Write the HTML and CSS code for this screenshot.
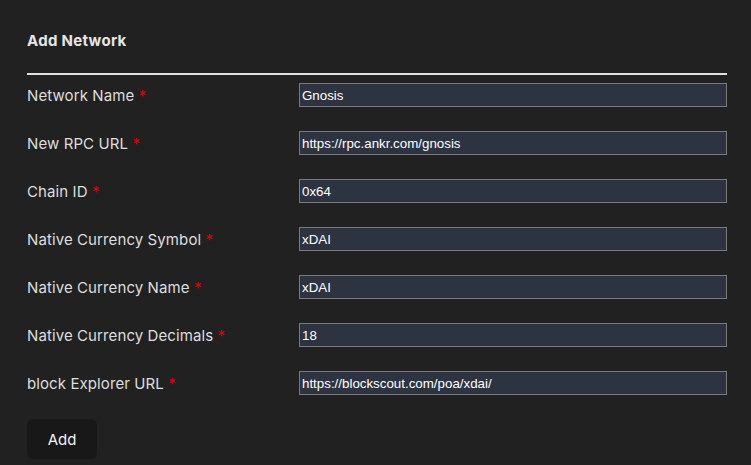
FILE: index.html
```html
<!DOCTYPE html>
<html>
<head>
<meta charset="utf-8">
<link rel="stylesheet" href="styles.css">
</head>
<body>
<div class="panel">
  <h2 class="title">Add Network</h2>
  <div class="rule"></div>
  <form class="form">
    <div class="row"><label class="label">Network Name <span class="req">*</span></label><input class="field" value="Gnosis"></div>
    <div class="row"><label class="label">New RPC URL <span class="req">*</span></label><input class="field" value="https://rpc.ankr.com/gnosis"></div>
    <div class="row"><label class="label">Chain ID <span class="req">*</span></label><input class="field" value="0x64"></div>
    <div class="row"><label class="label">Native Currency Symbol <span class="req">*</span></label><input class="field" value="xDAI"></div>
    <div class="row"><label class="label">Native Currency Name <span class="req">*</span></label><input class="field" value="xDAI"></div>
    <div class="row"><label class="label">Native Currency Decimals <span class="req">*</span></label><input class="field" value="18"></div>
    <div class="row"><label class="label">block Explorer URL <span class="req">*</span></label><input class="field" value="https://blockscout.com/poa/xdai/"></div>
  </form>
  <button class="btn" type="button">Add</button>
</div>
</body>
</html>
```
FILE: styles.css
```css
html, body {
  margin: 0;
  background: #212121;
  height: 100%;
}
.panel {
  padding: 30px 24px 0 27px;
  width: 700px;
  font-family: Inter, "Noto Sans", sans-serif;
}
.title {
  margin: 0;
  font-size: 15px;
  font-weight: 700;
  letter-spacing: 0.3px;
  color: #e6e6e6;
  line-height: 22px;
}
.rule {
  height: 2px;
  background: #e0e0e0;
  margin-top: 21px;
}
.form {
  display: flex;
  flex-direction: column;
  gap: 24px;
  margin-top: 8px;
}
.row {
  display: grid;
  grid-template-columns: 272px 428px;
  align-items: center;
  height: 24px;
}
.label {
  font-size: 15px;
  color: #dedede;
  line-height: 20px;
  letter-spacing: 0.1px;
  position: relative;
  top: 1px;
}
.req {
  color: #e00000;
}
.field {
  box-sizing: border-box;
  width: 428px;
  height: 24px;
  margin: 0;
  padding: 0 2px;
  background: #2d3340;
  border: 1px solid #7a7a7a;
  color: #ffffff;
  font-family: "Liberation Sans", Arial, sans-serif;
  font-size: 13.33px;
  outline: none;
}
.btn {
  margin-top: 24px;
  width: 70px;
  height: 40px;
  border: none;
  border-radius: 6px;
  background: #181818;
  color: #f2f2f2;
  font-family: Inter, "Noto Sans", sans-serif;
  font-size: 15px;
  font-weight: 400;
}
```
